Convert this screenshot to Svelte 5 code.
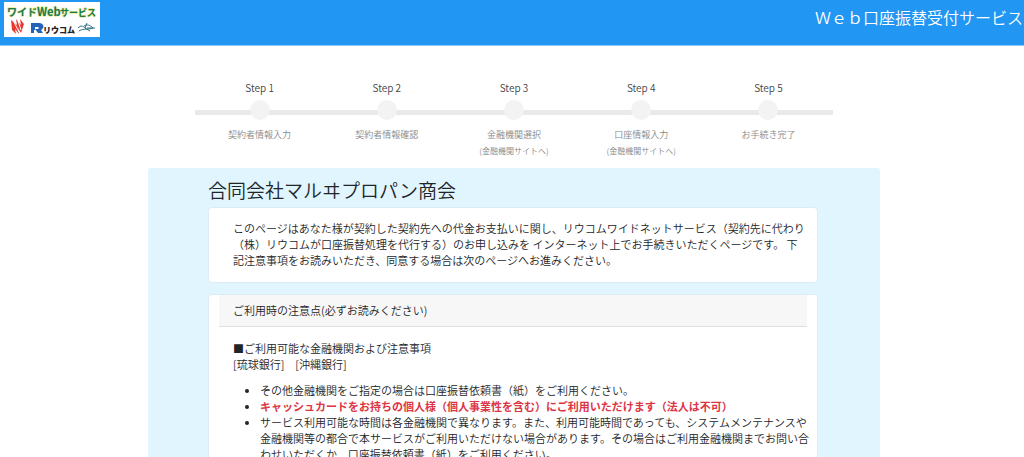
<script>
    const steps = [
        { name: 'Step 1', label: '契約者情報入力' },
        { name: 'Step 2', label: '契約者情報確認' },
        { name: 'Step 3', label: '金融機関選択', note: '(金融機関サイトへ)' },
        { name: 'Step 4', label: '口座情報入力', note: '(金融機関サイトへ)' },
        { name: 'Step 5', label: 'お手続き完了' }
    ];
</script>

<header>
    <svg class="logo" viewBox="0 0 96 35" role="img" aria-label="ワイドWebサービス リウコム">
        <rect width="96" height="35" fill="#fff"/>
        <g class="logo-title">
            <text x="3" y="14" font-size="10">ワイド</text>
            <text x="33" y="14" font-size="11">Web</text>
            <text x="56" y="14" font-size="9">サービス</text>
        </g>
        <path d="M7 18l6 5-1-6 5 6-1-6 4 5-3 9-3-5 1 6-4-5 1 5-4-4z" fill="#e8392f"/>
        <path d="M10 20l5 10M14 19l3 9" stroke="#fff" stroke-width="1"/>
        <path d="M27 21h8c5 0 6 5 2 7l2 3h-5l-3-4h3c1 0 1-2 0-2h-3v3h-1v3h-3z" fill="#2164b8"/>
        <text class="logo-name" x="39" y="31" font-size="8">リウコム</text>
        <path d="M74 26c3-3 5-2 7 0M75 29c5-3 9-1 14-3M80 24c3-2 6-1 9 2M83 21l-2 5 5 3M83 26h8" fill="none" stroke="#2f7187" stroke-width="1"/>
    </svg>
    <p class="service">Ｗｅｂ口座振替受付サービス</p>
</header>

<div class="page">
    <ol class="steps">
        {#each steps as step}
            <li>
                <span class="step-name">{step.name}</span>
                <span class="track"><span class="dot"></span></span>
                <span class="step-label">{step.label}</span>
                {#if step.note}
                    <small>{step.note}</small>
                {/if}
            </li>
        {/each}
    </ol>

    <main>
        <h1>合同会社マルヰプロパン商会</h1>

        <section class="card intro">
            <p>このページはあなた様が契約した契約先への代金お支払いに関し、リウコムワイドネットサービス（契約先に代わり（株）リウコムが口座振替処理を代行する）のお申し込みを インターネット上でお手続きいただくページです。 下記注意事項をお読みいただき、同意する場合は次のページへお進みください。</p>
        </section>

        <section class="card">
            <h2>ご利用時の注意点(必ずお読みください)</h2>
            <div class="card-body">
                <p>■ご利用可能な金融機関および注意事項<br>[琉球銀行]　[沖縄銀行]</p>
                <ul>
                    <li>その他金融機関をご指定の場合は口座振替依頼書（紙）をご利用ください。</li>
                    <li><strong>キャッシュカードをお持ちの個人様（個人事業性を含む）にご利用いただけます（法人は不可）</strong></li>
                    <li>サービス利用可能な時間は各金融機関で異なります。また、利用可能時間であっても、システムメンテナンスや金融機関等の都合で本サービスがご利用いただけない場合があります。その場合はご利用金融機関までお問い合わせいただくか、口座振替依頼書（紙）をご利用ください。</li>
                </ul>
            </div>
        </section>
    </main>
</div>

<style>
    :global(body) {
        background: #fff;
        color: #212529;
        font-family: "Noto Sans CJK JP", "Noto Sans", sans-serif;
        font-size: 11px;
        font-weight: 350;
        line-height: 16px;
    }

    p, h1, h2, ol, ul {
        margin: 0;
        padding: 0;
        font-weight: 350;
    }

    header {
        display: flex;
        justify-content: space-between;
        align-items: flex-start;
        height: 46px;
        padding: 2px 1px 0 4px;
        box-sizing: border-box;
        background: #2196f3;
        border-bottom: 1px solid #90caf9;
    }

    .logo {
        width: 96px;
        height: 35px;
    }

    .logo-title {
        fill: #17785c;
        stroke: #dfe65a;
        stroke-width: 1px;
        paint-order: stroke;
        font-weight: 700;
    }

    .logo-name {
        fill: #222;
        font-weight: 900;
    }

    .service {
        color: #fff;
        font-size: 16px;
        line-height: 30px;
    }

    .page {
        padding-left: 4px;
    }

    .steps {
        display: flex;
        max-width: 636px;
        height: 88px;
        margin: 0 auto;
        padding-top: 34px;
        list-style: none;
    }

    .steps li {
        flex: 1;
        display: flex;
        flex-direction: column;
        align-items: center;
    }

    .step-name {
        color: #444;
        font-size: 10px;
    }

    .track {
        display: flex;
        align-items: center;
        align-self: stretch;
        margin: 4px 0 7px;
    }

    .track::before,
    .track::after {
        content: "";
        flex: 1;
        height: 5px;
        margin: 4px -1px 0;
        background: #e9e9eb;
    }

    .dot {
        z-index: 1;
        width: 20px;
        height: 20px;
        border-radius: 50%;
        background: #f3f3f3;
    }

    .step-label {
        color: #888;
        font-size: 9px;
    }

    small {
        color: #888;
        font-size: 8px;
    }

    main {
        max-width: 610px;
        margin: 0 auto;
        padding: 10px 62px 24px 60px;
        border-radius: 3px;
        background: #e1f5fe;
    }

    h1 {
        margin-bottom: 6px;
        font-size: 19px;
        line-height: 23px;
    }

    .card {
        margin-bottom: 11px;
        padding: 0 10px;
        border: 1px solid #dcecf3;
        border-radius: 4px;
        background: #fff;
    }

    .intro {
        padding: 12px 10px 14px 24px;
    }

    h2 {
        padding: 7px 14px 8px;
        border-bottom: 1px solid #dfdfdf;
        background: #f7f7f7;
        font-size: 11px;
    }

    .card-body {
        padding: 13px 0 13px 14px;
        margin-right: -8px;
    }

    ul {
        margin-top: 10px;
        padding-left: 27px;
    }

    strong {
        color: #dc3545;
        font-weight: 700;
    }
</style>
